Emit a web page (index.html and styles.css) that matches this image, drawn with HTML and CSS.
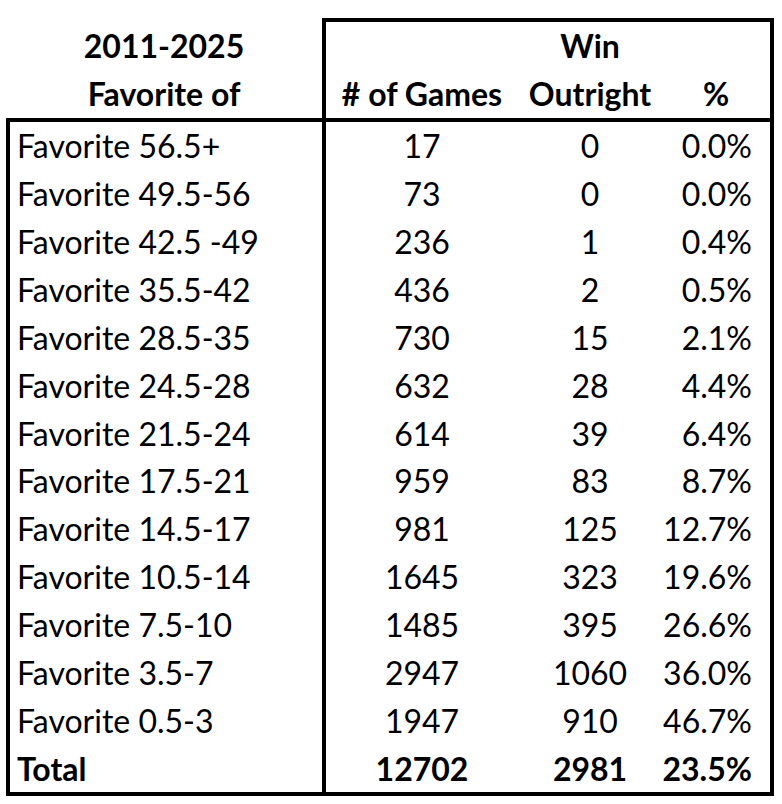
FILE: index.html
```html
<!DOCTYPE html>
<html>
<head>
<meta charset="utf-8">
<link rel="stylesheet" href="styles.css">
</head>
<body>
<div class="sheet">
  <div class="head">
    <div class="hcell label-h"><div>2011-2025</div><div>Favorite of</div></div>
    <div class="hbox">
      <div class="hcell c2"><div>&nbsp;</div><div># of Games</div></div>
      <div class="hcell c3"><div>Win</div><div>Outright</div></div>
      <div class="hcell c4"><div>&nbsp;</div><div>%</div></div>
    </div>
  </div>
  <div class="body">
    <div class="col col1">
      <div class="cell">Favorite 56.5+</div>
      <div class="cell">Favorite 49.5-56</div>
      <div class="cell">Favorite 42.5 -49</div>
      <div class="cell">Favorite 35.5-42</div>
      <div class="cell">Favorite 28.5-35</div>
      <div class="cell">Favorite 24.5-28</div>
      <div class="cell">Favorite 21.5-24</div>
      <div class="cell">Favorite 17.5-21</div>
      <div class="cell">Favorite 14.5-17</div>
      <div class="cell">Favorite 10.5-14</div>
      <div class="cell">Favorite 7.5-10</div>
      <div class="cell">Favorite 3.5-7</div>
      <div class="cell">Favorite 0.5-3</div>
      <div class="cell bold">Total</div>
    </div>
    <div class="col col2">
      <div class="cell">17</div>
      <div class="cell">73</div>
      <div class="cell">236</div>
      <div class="cell">436</div>
      <div class="cell">730</div>
      <div class="cell">632</div>
      <div class="cell">614</div>
      <div class="cell">959</div>
      <div class="cell">981</div>
      <div class="cell">1645</div>
      <div class="cell">1485</div>
      <div class="cell">2947</div>
      <div class="cell">1947</div>
      <div class="cell bold">12702</div>
    </div>
    <div class="col col3">
      <div class="cell">0</div>
      <div class="cell">0</div>
      <div class="cell">1</div>
      <div class="cell">2</div>
      <div class="cell">15</div>
      <div class="cell">28</div>
      <div class="cell">39</div>
      <div class="cell">83</div>
      <div class="cell">125</div>
      <div class="cell">323</div>
      <div class="cell">395</div>
      <div class="cell">1060</div>
      <div class="cell">910</div>
      <div class="cell bold">2981</div>
    </div>
    <div class="col col4">
      <div class="cell">0.0%</div>
      <div class="cell">0.0%</div>
      <div class="cell">0.4%</div>
      <div class="cell">0.5%</div>
      <div class="cell">2.1%</div>
      <div class="cell">4.4%</div>
      <div class="cell">6.4%</div>
      <div class="cell">8.7%</div>
      <div class="cell">12.7%</div>
      <div class="cell">19.6%</div>
      <div class="cell">26.6%</div>
      <div class="cell">36.0%</div>
      <div class="cell">46.7%</div>
      <div class="cell bold">23.5%</div>
    </div>
  </div>
</div>
</body>
</html>
```

FILE: styles.css
```css
html, body {
  margin: 0;
  padding: 0;
  background: #ffffff;
}
.sheet {
  padding: 18px 0 0 6px;
  width: 768px;
  font-family: Lato, "Noto Sans", sans-serif;
  font-size: 32px;
  color: #000;
}
.head {
  display: flex;
  height: 100px;
}
.hcell {
  font-weight: bold;
  text-align: center;
  line-height: 48px;
}
.label-h {
  width: 316px;
  padding-top: 4px;
}
.hbox {
  display: flex;
  border: 4px solid #000;
  border-bottom: none;
  width: 444px;
}
.body {
  display: flex;
  border: 4px solid #000;
  height: 670px;
}
.col {
  display: flex;
  flex-direction: column;
}
.cell {
  flex: 1;
  display: flex;
  align-items: center;
  white-space: nowrap;
}
.bold { font-weight: bold; }
.col1 { width: 305px; padding-left: 7px; }
.col2 { width: 192px; border-left: 4px solid #000; }
.col3 { width: 144px; }
.col4 { width: 108px; }
.col2 .cell, .col3 .cell { justify-content: center; }
.col4 .cell { justify-content: flex-end; padding-right: 18px; }
.hbox .c2 { width: 192px; }
.hbox .c3 { width: 144px; }
.hbox .c4 { width: 108px; }
```
